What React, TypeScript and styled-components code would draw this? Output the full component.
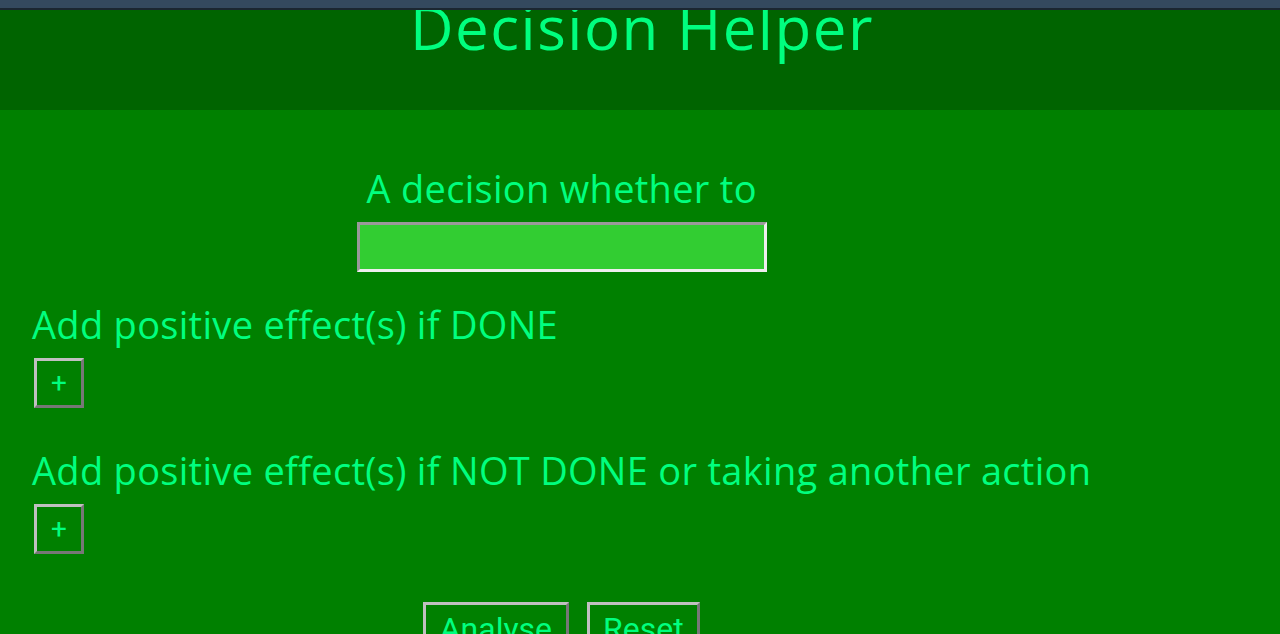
import React from "react";
import styled, { createGlobalStyle } from "styled-components";

const Global = createGlobalStyle`
  html, body { margin: 0; padding: 0; }
  body {
    background: #008000;
    font-family: "Open Sans", "Noto Sans", sans-serif;
    color: #00ff7f;
    overflow: hidden;
  }
`;

const TopBar = styled.div`
  height: 8px;
  background: #34495e;
  border-bottom: 2px solid #1b2631;
`;

const Header = styled.header`
  height: 100px;
  background: #006400;
  overflow: hidden;
  text-align: center;
`;

const Title = styled.h1`
  margin: -13px 0 0;
  padding-left: 4px;
  font-size: 60px;
  line-height: 1;
  letter-spacing: 1.5px;
  font-weight: 400;
  color: #00ff7f;
  display: inline-block;
`;

const Main = styled.main`
  padding: 0 32px;
`;

const Form = styled.div`
  width: fit-content;
  display: flex;
  flex-direction: column;
`;

const Centered = styled.div`
  display: flex;
  flex-direction: column;
  align-items: center;
`;

const Label = styled.div<{ $top: number }>`
  font-size: 38px;
  line-height: 44px;
  letter-spacing: 0.3px;
  margin-top: ${(p) => p.$top}px;
  white-space: nowrap;
`;

const TextInput = styled.input`
  box-sizing: border-box;
  width: 410px;
  height: 50px;
  margin-top: 12px;
  background: #32cd32;
  border: 3px solid;
  border-color: #999 #eee #eee #999;
  outline: none;
  padding: 0 8px;
  font-size: 24px;
  color: #00ff7f;
`;

const PlusButton = styled.button`
  box-sizing: border-box;
  width: 50px;
  height: 50px;
  margin: 12px 0 0 2px;
  background: transparent;
  border: 3px solid;
  border-color: #c0c0c0 #777 #777 #c0c0c0;
  color: #00ff7f;
  font-family: "Roboto", sans-serif;
  font-size: 28px;
  line-height: 1;
  padding: 0;
  cursor: pointer;
  align-self: flex-start;
`;

const Actions = styled.div`
  display: flex;
  justify-content: center;
  gap: 18px;
  margin-top: 48px;
`;

const ActionButton = styled.button`
  box-sizing: border-box;
  height: 52px;
  background: transparent;
  border: 3px solid;
  border-color: #c0c0c0 #777 #777 #c0c0c0;
  color: #00ff7f;
  font-family: "Roboto", sans-serif;
  font-size: 32px;
  line-height: 1;
  padding: 8px 13.5px;
  cursor: pointer;
`;

export default function App() {
  return (
    <>
      <Global />
      <TopBar />
      <Header>
        <Title>Decision Helper</Title>
      </Header>
      <Main>
        <Form>
          <Centered>
            <Label $top={56}>A decision whether to</Label>
            <TextInput type="text" />
          </Centered>
          <Label $top={30}>Add positive effect(s) if DONE</Label>
          <PlusButton>+</PlusButton>
          <Label $top={40}>Add positive effect(s) if NOT DONE or taking another action</Label>
          <PlusButton>+</PlusButton>
          <Actions>
            <ActionButton>Analyse</ActionButton>
            <ActionButton>Reset</ActionButton>
          </Actions>
        </Form>
      </Main>
    </>
  );
}
